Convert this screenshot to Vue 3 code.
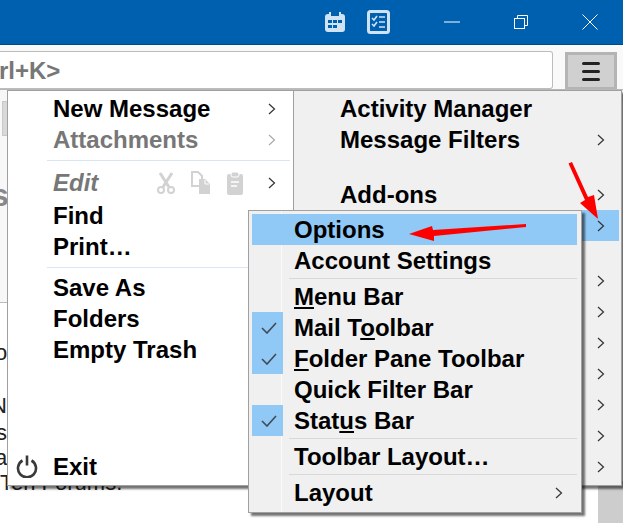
<script setup>
const leftTop = [
  { label: 'New Message', arrow: true },
  { label: 'Attachments', arrow: true, muted: true }
]
const leftMid = ['Find', 'Print…']
const leftSave = ['Save As', 'Folders', 'Empty Trash']
const rightChevrons = [0, 1, 2, 3, 4, 5, 6]
</script>

<template>
  <div class="window">
    <header class="titlebar">
      <svg class="tb-icon cal" width="24" height="24" viewBox="0 0 24 24">
        <path d="M7 2v4M17 2v4" stroke="#cfe3f5" stroke-width="2" fill="none" />
        <rect x="2" y="4" width="20" height="18" rx="3" fill="#cfe3f5" />
        <rect x="8" y="3" width="8" height="3" fill="#0060b0" />
        <path d="M5 10h4v3H5zM10 10h4v3h-4zM15 10h4v3h-4zM5 15h4v3H5zM10 15h4v3h-4z" fill="#0060b0" />
      </svg>
      <svg class="tb-icon task" width="23" height="24" viewBox="0 0 23 24">
        <rect x="1.500" y="1.500" width="20" height="21" rx="2" fill="#0060b0" stroke="#cfe3f5" stroke-width="3" />
        <path d="M5 8l2 2 3-4M5 14l2 2 3-4" stroke="#cfe3f5" stroke-width="1.600" fill="none" />
        <path d="M12 7h6M12 12h6M12 17h6" stroke="#cfe3f5" stroke-width="1.600" />
      </svg>
      <svg class="win-min" width="16" height="2" viewBox="0 0 16 2"><path d="M0 1h16" stroke="#fff" stroke-width="1" /></svg>
      <svg class="win-max" width="14" height="14" viewBox="0 0 14 14">
        <path d="M3.500 3V.5h10v10H11" fill="none" stroke="#fff" />
        <rect x=".5" y="3.500" width="10" height="10" fill="none" stroke="#fff" />
      </svg>
      <svg class="win-close" width="16" height="16" viewBox="0 0 16 16"><path d="M.5.5l15 15M15.500.5l-15 15" stroke="#fff" /></svg>
    </header>

    <div class="toolbar">
      <div class="search">rl+K&gt;</div>
      <button class="burger"><span></span><span></span><span></span></button>
    </div>

    <div class="strip"></div>

    <div class="page">
      <div class="side-panel">
        <div class="tab-stub"></div>
      </div>
      <span class="frag frag-s">s</span>
      <span class="frag frag-o">o</span>
      <span class="frag frag-n">N</span>
      <span class="frag frag-s2">s</span>
      <span class="frag frag-a">a</span>
      <span class="frag frag-ten">Ten Forums.</span>
      <div class="scroll-thumb"></div>
    </div>

    <!-- main app menu, left pane -->
    <div class="menu menu-left">
      <div v-for="item in leftTop" :key="item.label" class="row" :class="{ muted: item.muted }">
        <span class="label">{{ item.label }}</span>
        <svg class="chev" width="8" height="12" viewBox="0 0 8 12"><path d="M1 1l5.500 5-5.500 5" fill="none" stroke="currentColor" stroke-width="1.200" /></svg>
      </div>
      <div class="sep sep-blue"></div>
      <div class="row edit-row">
        <span class="label edit">Edit</span>
        <svg class="edit-ic" width="20" height="22" viewBox="0 0 20 22">
          <path d="M4 1l9 14M16 1L7 15" stroke="#d2d2d2" stroke-width="3" fill="none" />
          <circle cx="5" cy="18" r="3" fill="none" stroke="#d2d2d2" stroke-width="2" />
          <circle cx="15" cy="18" r="3" fill="none" stroke="#d2d2d2" stroke-width="2" />
        </svg>
        <svg class="edit-ic" width="22" height="24" viewBox="0 0 22 24">
          <path d="M2 1h6l4 4v10H2z" fill="#fff" stroke="#d2d2d2" stroke-width="2" />
          <path d="M9 8h6l5 5v10H9z" fill="#d2d2d2" />
          <path d="M15 9v4h4" fill="none" stroke="#fff" />
        </svg>
        <svg class="edit-ic" width="18" height="24" viewBox="0 0 18 24">
          <rect x="1" y="3" width="16" height="21" rx="2" fill="#d2d2d2" />
          <rect x="5" y="1" width="8" height="5" rx="2" fill="#d2d2d2" stroke="#fff" />
          <path d="M5 11h8M5 15h6" stroke="#fff" stroke-width="1.400" />
        </svg>
        <svg class="chev dark" width="8" height="12" viewBox="0 0 8 12"><path d="M1 1l5.500 5-5.500 5" fill="none" stroke="currentColor" stroke-width="1.200" /></svg>
      </div>
      <div v-for="label in leftMid" :key="label" class="row"><span class="label">{{ label }}</span></div>
      <div class="sep sep-blue sep-mid"></div>
      <div v-for="label in leftSave" :key="label" class="row"><span class="label">{{ label }}</span></div>
      <div class="row exit">
        <svg class="power" width="22" height="24" viewBox="0 0 22 24">
          <path d="M6.500 6.500a9 9 0 1 0 9 0M11 1.500v10" fill="none" stroke="#3a3a3a" stroke-width="2.600" />
        </svg>
        <span class="label">Exit</span>
      </div>
    </div>

    <!-- main app menu, right pane -->
    <div class="menu menu-right">
      <div class="row"><span class="label">Activity Manager</span></div>
      <div class="row">
        <span class="label">Message Filters</span>
        <svg class="chev dark" width="8" height="12" viewBox="0 0 8 12"><path d="M1 1l5.500 5-5.500 5" fill="none" stroke="currentColor" stroke-width="1.200" /></svg>
      </div>
      <div class="row addons">
        <span class="label">Add-ons</span>
        <svg class="chev dark" width="8" height="12" viewBox="0 0 8 12"><path d="M1 1l5.500 5-5.500 5" fill="none" stroke="currentColor" stroke-width="1.200" /></svg>
      </div>
      <div class="row active-row">
        <svg class="chev dark" width="8" height="12" viewBox="0 0 8 12"><path d="M1 1l5.500 5-5.500 5" fill="none" stroke="currentColor" stroke-width="1.200" /></svg>
      </div>
      <div class="gap-row"></div>
      <div v-for="n in rightChevrons" :key="n" class="row">
        <svg class="chev dark" width="8" height="12" viewBox="0 0 8 12"><path d="M1 1l5.500 5-5.500 5" fill="none" stroke="currentColor" stroke-width="1.200" /></svg>
      </div>
    </div>

    <!-- View submenu -->
    <div class="menu menu-sub">
      <div class="gutter"></div>
      <div class="row sub hl"><span class="label">Options</span></div>
      <div class="row sub"><span class="label">Account Settings</span></div>
      <div class="sep sep-gray"></div>
      <div class="row sub"><span class="label"><u>M</u>enu Bar</span></div>
      <div class="row sub checked">
        <svg class="tick" width="16" height="12" viewBox="0 0 16 12"><path d="M1 6l5 5 9-10" fill="none" stroke="#3f4a55" stroke-width="1.600" /></svg>
        <span class="label">Mail T<u>o</u>olbar</span>
      </div>
      <div class="row sub checked">
        <svg class="tick" width="16" height="12" viewBox="0 0 16 12"><path d="M1 6l5 5 9-10" fill="none" stroke="#3f4a55" stroke-width="1.600" /></svg>
        <span class="label"><u>F</u>older Pane Toolbar</span>
      </div>
      <div class="row sub"><span class="label">Quick Filter Bar</span></div>
      <div class="row sub checked">
        <svg class="tick" width="16" height="12" viewBox="0 0 16 12"><path d="M1 6l5 5 9-10" fill="none" stroke="#3f4a55" stroke-width="1.600" /></svg>
        <span class="label">Stat<u>u</u>s Bar</span>
      </div>
      <div class="sep sep-gray"></div>
      <div class="row sub"><span class="label">Toolbar Layout…</span></div>
      <div class="sep sep-gray"></div>
      <div class="row sub">
        <span class="label">Layout</span>
        <svg class="chev dark" width="8" height="12" viewBox="0 0 8 12"><path d="M1 1l5.500 5-5.500 5" fill="none" stroke="currentColor" stroke-width="1.200" /></svg>
      </div>
    </div>

    <!-- annotation arrows -->
    <svg class="arrows" width="623" height="523" viewBox="0 0 623 523">
      <path d="M568.500 163.500L572 162l16 35 6-2 4 24-18-16 5-3z" fill="#f00" />
      <path d="M409 234l23-8 1 4 93-6v3l-92 9v5z" fill="#f00" />
    </svg>
  </div>
</template>

<style>
html, body { margin: 0; background: #fff; }
</style>

<style scoped>
.window {
  position: relative;
  width: 623px;
  height: 523px;
  overflow: hidden;
  background: #fff;
  font-family: "Liberation Sans", Arial, sans-serif;
}
.titlebar {
  height: 44px;
  background: #0060b0;
  border-bottom: 1px solid #004a87;
  display: flex;
  align-items: center;
  padding-left: 323px;
  box-sizing: content-box;
}
.tb-icon.task { margin-left: 20px; }
.win-min { margin-left: 54px; }
.win-max { margin-left: 54px; }
.win-close { margin-left: 54px; }
.toolbar {
  height: 44px;
  background: #f9f9f9;
  display: flex;
  align-items: flex-end;
}
.search {
  width: 553px;
  height: 38px;
  box-sizing: border-box;
  background: #fff;
  border: 1px solid #bcbcbc;
  border-left: 0;
  border-radius: 0 3px 3px 0;
  font-size: 24px;
  font-weight: 700;
  color: #777;
  line-height: 37px;
  text-indent: -1px;
}
.burger {
  width: 52px;
  height: 37px;
  margin-left: 12px;
  padding: 0;
  box-sizing: border-box;
  background: #d0d0d0;
  border: 3px solid #b4b4b4;
  border-bottom-width: 2px;
  display: flex;
  flex-direction: column;
  justify-content: center;
  align-items: center;
  gap: 5px;
}
.burger span {
  width: 18px;
  height: 3px;
  border-radius: 2px;
  background: #222;
}
.strip {
  height: 12px;
  background: #eee;
  border-top: 1px solid #b8b8b8;
  box-sizing: border-box;
}
.page { position: relative; }
.frag {
  position: absolute;
  font-size: 22px;
  color: #222;
  line-height: 26px;
}
.side-panel {
  position: absolute;
  left: 0;
  top: -11px;
  width: 8px;
  height: 212px;
  background: #f7f7f7;
  border-bottom: 1px solid #bbb;
}
.tab-stub {
  position: absolute;
  left: 2px;
  top: 11px;
  width: 6px;
  height: 35px;
  box-sizing: border-box;
  background: #d8d8d8;
  border: 1px solid #c8c8c8;
}
.frag-s { left: -9px; top: 76px; font-size: 32px; font-weight: 700; color: #888; line-height: 36px; }
.frag-o { left: -5px; top: 239px; }
.frag-n { left: -9px; top: 292px; }
.frag-s2 { left: -4px; top: 319px; }
.frag-a { left: -5px; top: 344px; }
.frag-ten { left: 0; top: 369px; white-space: nowrap; }
.scroll-thumb {
  position: absolute;
  left: 598px;
  top: 380px;
  width: 25px;
  height: 42px;
  background: #cdcdcd;
}
.menu {
  position: absolute;
  box-sizing: border-box;
  border: 1px solid #a0a0a0;
  box-shadow: 3px 3px 2px rgba(0, 0, 0, 0.55);
}
.menu-left {
  left: 7px;
  top: 90px;
  width: 287px;
  height: 396px;
  background: #fff;
  padding-top: 3px;
  display: flex;
  flex-direction: column;
}
.menu-right {
  left: 293px;
  top: 90px;
  width: 329px;
  height: 396px;
  background: #f0f0f0;
  padding-top: 3px;
  display: flex;
  flex-direction: column;
}
.menu-sub {
  left: 248px;
  top: 210px;
  width: 334px;
  height: 303px;
  background: #f0f0f0;
  padding: 3px 4px 3px 3px;
  display: flex;
  flex-direction: column;
}
.gutter {
  position: absolute;
  left: 32px;
  top: 0;
  bottom: 0;
  width: 1px;
  background: #fafafa;
}
.row {
  position: relative;
  height: 31px;
  flex: none;
  box-sizing: border-box;
  display: flex;
  align-items: center;
  font-size: 24px;
  font-weight: 700;
  color: #000;
}
.label { white-space: nowrap; }
.menu-left .row { padding: 0 17px 2px 45px; }
.menu-right .row { padding: 0 16px 2px 46px; }
.muted { color: #777; }
.chev { margin-left: auto; color: #333; flex: none; }
.muted .chev { color: #aaa; }
.sep { flex: none; height: 1px; }
.sep-blue { background: #d9e6f2; margin: 4px 3px 7px 39px; }
.sep-mid { margin: 4px 3px 5px 39px; }
.edit { color: #777; font-style: italic; margin-right: auto; }
.edit-row { margin-bottom: 2px; }
.edit-ic { margin-left: 14px; flex: none; }
.edit-row .edit + .edit-ic { margin-left: 0; }
.edit-row .chev { margin-left: 24px; }
.menu-left .exit { margin-top: 86px; padding-left: 8px; }
.exit .label { margin-left: 15px; }
.power { margin-bottom: 2px; }
.addons { margin-top: 24px; }
.menu-right .active-row {
  background: #90c8f6;
  margin-top: -1px;
  margin-left: 288px;
  width: 37px;
  padding: 0 14px 0 0;
}
.gap-row { height: 25px; flex: none; }
.sub { padding: 0 14px 0 42px; }
.sub.hl { background: #90c8f6; }
.checked::before {
  content: "";
  position: absolute;
  left: 0;
  top: 0;
  width: 31px;
  height: 31px;
  background: #90c8f6;
}
.tick { position: absolute; left: 9px; top: 10px; }
.sep-gray { background: #d8d8d8; margin: 2px 0 2px 37px; width: 288px; }
u { text-underline-offset: 2px; text-decoration-thickness: 2px; }
.arrows { position: absolute; left: 0; top: 0; pointer-events: none; }
</style>
